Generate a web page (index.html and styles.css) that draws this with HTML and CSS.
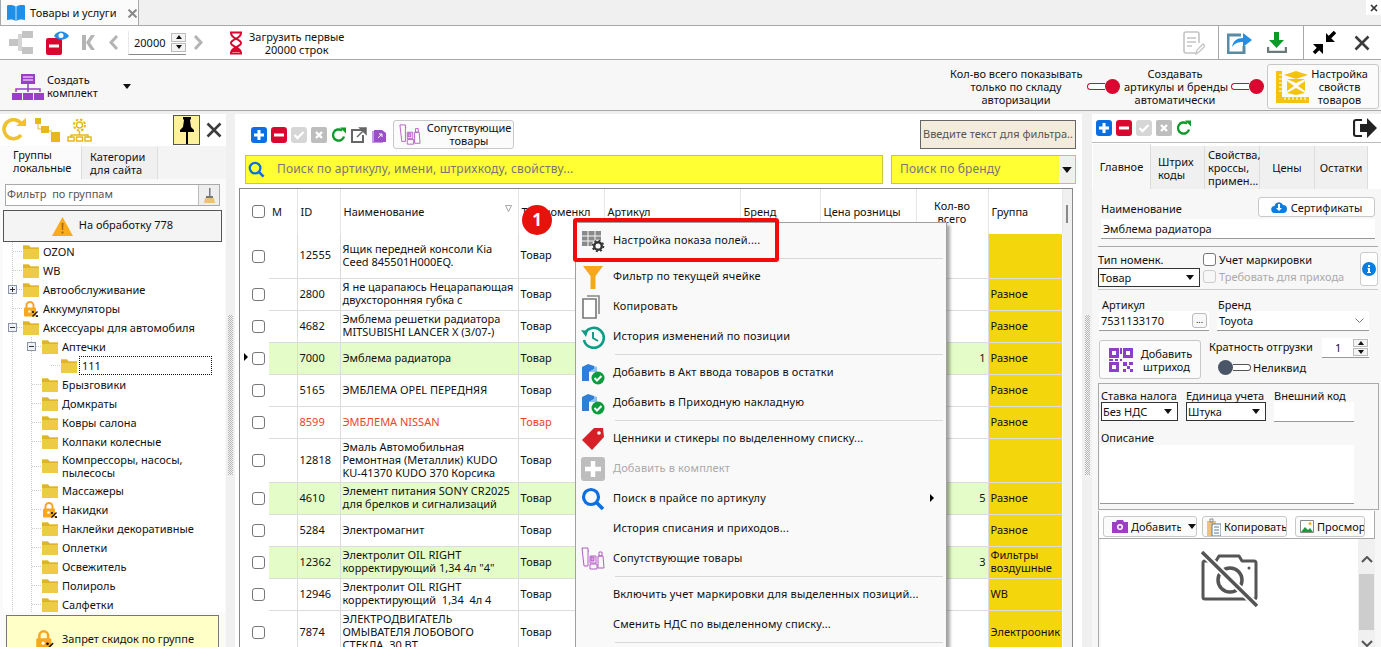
FILE: index.html
```html
<!DOCTYPE html>
<html lang="ru">
  <head>
    <meta charset="UTF-8" />
    <title>Товары и услуги</title>
    <link rel="stylesheet" href="styles.css">
  </head>
  <body>
    <svg class="sprite" width="0" height="0">
      <symbol id="i-plus" viewBox="0 0 16 16"><rect width="16" height="16" rx="3" fill="#0b6fe4"/><path d="M8 3v10M3 8h10" stroke="#fff" stroke-width="3"/></symbol>
      <symbol id="i-minus" viewBox="0 0 16 16"><rect width="16" height="16" rx="3" fill="#d9072f"/><path d="M3 8h10" stroke="#fff" stroke-width="3"/></symbol>
      <symbol id="i-check" viewBox="0 0 16 16"><rect width="16" height="16" rx="3" fill="#d6d6d6"/><path d="M3.500 8l3 3 6-6" stroke="#fff" stroke-width="2.400" fill="none"/></symbol>
      <symbol id="i-cross" viewBox="0 0 16 16"><rect width="16" height="16" rx="2" fill="#bdbdbd"/><path d="M5 5l6 6M11 5l-6 6" stroke="#fff" stroke-width="2.400"/></symbol>
      <symbol id="i-refresh" viewBox="0 0 16 16"><path d="M13 9.500A5.600 5.600 0 1 1 11 3.600" fill="none" stroke="#0c9a2a" stroke-width="2.400"/><path d="M9 .5h6v6z" fill="#0c9a2a"/></symbol>
      <symbol id="i-folder" viewBox="0 0 16 16"><path d="M0 1.500h6l1.500 2H16V15H0z" fill="#eecb45"/><path d="M0 1.500h6l1.500 2H16V5H0z" fill="#dfb32a"/></symbol>
      <symbol id="i-lock" viewBox="0 0 16 16"><path d="M3.500 7V4.500a3.500 3.500 0 0 1 7 0V7" fill="none" stroke="#f5a623" stroke-width="2"/><rect x="1" y="6.500" width="12" height="9" rx="1" fill="#f7a81c"/><circle cx="6.500" cy="10.500" r="1.300" fill="#fff"/><path d="M9.500 15.500l5-5" stroke="#111" stroke-width="1.200"/><circle cx="10" cy="11" r="1.100" fill="#111"/><circle cx="14" cy="15" r="1.100" fill="#111"/></symbol>
      <symbol id="i-grid-gear" viewBox="0 0 24 24"><path d="M1 2h19v15H1z" fill="#8a8a8a"/><path d="M1 7h19M1 12h19M7 2v15M14 2v15" stroke="#f9f9f9" stroke-width="1"/><circle cx="17" cy="17" r="6.500" fill="#f9f9f9"/><circle cx="17" cy="17" r="3.800" fill="none" stroke="#333" stroke-width="2.400"/><circle cx="17" cy="17" r="5.500" fill="none" stroke="#333" stroke-width="1.600" stroke-dasharray="2 2.300"/></symbol>
      <symbol id="i-cubes" viewBox="0 0 24 24"><path d="M1 6l6-3 6 2v3l-5 3v9H1z" fill="#2f7fd6"/><path d="M8 11l5-3V5l3 1v5z" fill="#8cc0ee"/><circle cx="17" cy="17" r="6.500" fill="#0b9a3c"/><path d="M13.500 17l2.500 2.500 4.500-4.500" fill="none" stroke="#fff" stroke-width="2"/></symbol>
      <symbol id="i-x" viewBox="0 0 16 16"><path d="M1.500 1.500l13 13M14.500 1.500l-13 13" stroke="#3c3c3c" stroke-width="2.600"/></symbol>
      <symbol id="i-caret" viewBox="0 0 8 5"><path d="M0 0h8L4 5z" fill="#111"/></symbol>
      <symbol id="i-search" viewBox="0 0 24 24"><circle cx="10" cy="10" r="7.500" fill="none" stroke="#0b6fe4" stroke-width="3.200"/><path d="M15.500 15.500L22 22" stroke="#0b6fe4" stroke-width="3.600"/></symbol>
      <symbol id="i-bottles" viewBox="0 0 24 24" fill="none" stroke="#b45cc4" stroke-width="1"><path d="M1 1h6v18H3zM7 4h1M9 9h6v7H9zM17 9h5l1 12h-6zM18 5h3v4h-3zM9 17h7v5H9z"/><path d="M10 10h3v4h-3z" fill="#d8a8de"/></symbol>
    </svg>

    <div class="tabbar">
      <div class="tab">
        <svg width="20" height="18" viewBox="0 0 20 18"><path d="M10 3C8 1 4 .5 1 1.500V16c3-1 7-.5 9 1 2-1.500 6-2 9-1V1.500C16 .5 12 1 10 3z" fill="#1f8fe8"/><path d="M10 3v14" stroke="#bfe0fa" stroke-width="1"/></svg>
        <span>Товары и услуги</span>
        <svg class="tab-x" width="9" height="9" viewBox="0 0 16 16"><path d="M1 1l14 14M15 1L1 15" stroke="#888" stroke-width="3.500"/></svg>
      </div>
      <div class="tabbar-close"><svg width="8" height="8" viewBox="0 0 16 16"><path d="M2 2l12 12M14 2L2 14" stroke="#333" stroke-width="3.500"/></svg></div>
    </div>

    <div class="bar-top">
      <svg class="ico-tree" width="24" height="23" viewBox="0 0 24 23"><path d="M0 8h9v7H0zM13 0h11v7H13zM13 16h11v7H13z" fill="#c4c4c4"/><path d="M9 3h4v17H9z" fill="#d4d4d4"/></svg>
      <svg class="ico-eye" width="23" height="24" viewBox="0 0 23 24"><rect y="7" width="16" height="17" rx="2" fill="#d9072f"/><path d="M3 15h10" stroke="#fff" stroke-width="3"/><path d="M8 5c3-6 11-6 15 0-4 5-11 5-15 0z" fill="#1f8fe8"/><circle cx="15" cy="4.500" r="2.500" fill="#fff"/></svg>
      <svg class="ico-first" width="13" height="15" viewBox="0 0 13 15"><path d="M0 0h4v15H0zM4 7.500L9 0h4L8 7.500l5 7.500H9z" fill="#b4b4b4"/></svg>
      <svg class="ico-prev" width="11" height="15" viewBox="0 0 11 15"><path d="M9 1L3 7.500 9 14" fill="none" stroke="#b4b4b4" stroke-width="3"/></svg>
      <div class="spin">
        <span>20000</span>
        <div class="spin-btns"><i class="up"></i><i class="down"></i></div>
      </div>
      <svg class="ico-next" width="11" height="15" viewBox="0 0 11 15"><path d="M2 1l6 6.500L2 14" fill="none" stroke="#b4b4b4" stroke-width="3"/></svg>
      <svg class="ico-hour" width="16" height="24" viewBox="0 0 16 24"><path d="M2 1.500h12M2 22.500h12M3 2c0 6 10 6 10 10s-10 4-10 10M13 2c0 6-10 6-10 10s10 4 10 10" fill="none" stroke="#d9072f" stroke-width="2"/><path d="M3 21c1-3 3-4 5-5 2 1 4 2 5 5z" fill="#d9072f"/></svg>
      <div class="load-text">Загрузить первые<br>20000 строк</div>
      <div class="spacer"></div>
      <svg class="ico-doc" width="22" height="24" viewBox="0 0 22 24"><path d="M14 22H3a2 2 0 0 1-2-2V3a2 2 0 0 1 2-2h11a2 2 0 0 1 2 2v9" fill="none" stroke="#c4c4c4" stroke-width="1.600"/><path d="M4 7h9M4 11h9M4 15h5" stroke="#c4c4c4" stroke-width="1.500"/><path d="M13 23l1-4 6-6 2 2-6 6z" fill="none" stroke="#c4c4c4" stroke-width="1.300"/></svg>
      <div class="vline vl1"></div>
      <svg class="ico-share" width="25" height="22" viewBox="0 0 25 22"><path d="M14 3H1v18h16v-7" fill="none" stroke="#5b8aa3" stroke-width="3"/><path d="M5 15c1-6 5-9 11-9V1l9 7-9 7v-5c-5 0-8 1-11 5z" fill="#1f8fe8"/></svg>
      <svg class="ico-down" width="20" height="21" viewBox="0 0 20 21"><path d="M7 0h5v8h5l-7.500 8L2 8h5z" fill="#0c9a2a"/><path d="M1 15v5h18v-5" fill="none" stroke="#6a7a78" stroke-width="2.400"/></svg>
      <div class="vline vl2"></div>
      <svg class="ico-col" width="24" height="24" viewBox="0 0 24 24"><path d="M23 1l-7 7M10 14l-8 8" stroke="#000" stroke-width="3.500"/><path d="M14 2v9h9zM1 13h10v10z" fill="#000"/></svg>
      <svg class="ico-close" width="16" height="16"><use href="#i-x"/></svg>
    </div>

    <div class="bar-second">
      <svg class="ico-kit" width="32" height="26" viewBox="0 0 32 26"><path d="M9 0h14v10H9z" fill="#9b3fc8"/><path d="M11 3h10M11 6h10" stroke="#fff"/><path d="M16 10v5M4 18v-3h24v3M16 15v3" stroke="#9b3fc8" stroke-width="1.500" fill="none"/><path d="M0 19h10v7H0zM11 19h10v7H11zM22 19h10v7H22z" fill="#9b3fc8"/></svg>
      <div class="kit-text">Создать<br>комплект</div>
      <svg class="caret kit-caret" width="8" height="5"><use href="#i-caret"/></svg>
      <div class="spacer"></div>
      <div class="opt-text opt-a">Кол-во всего показывать<br>только по складу<br>авторизации</div>
      <div class="toggle"><i></i><b></b></div>
      <div class="opt-text opt-b">Создавать<br>артикулы и бренды<br>автоматически</div>
      <div class="toggle toggle-2"><i></i><b></b></div>
      <button class="setup-btn">
        <svg width="33" height="32" viewBox="0 0 33 32"><path d="M0 0h6v26h27v6H0z" fill="#f2c40f"/><path d="M3 4h3M3 8h3M3 12h3M3 16h3M3 20h3M9 29v-3M13 29v-3M17 29v-3M21 29v-3M25 29v-3M29 29v-3" stroke="#fff"/><path d="M20 0l12 4-12 4L8 4z" fill="#f2c40f"/><path d="M11 8h18l-9 4zM11 10v10l7-5zM29 10v10l-7-5z" fill="#f2c40f"/><path d="M20 17l9 5-9 2-9-2z" fill="#f2c40f"/></svg>
        <span>Настройка<br>свойств<br>товаров</span>
      </button>
    </div>

    <div class="main">
      <div class="left">
        <div class="left-tools">
          <svg width="25" height="25" viewBox="0 0 25 25"><path d="M19 17a9.500 9.500 0 1 1 1-10" fill="none" stroke="#efc22d" stroke-width="3.600"/><path d="M14 8h10V0z" fill="#efc22d"/></svg>
          <svg class="lt-2" width="25" height="24" viewBox="0 0 25 24"><path d="M0 0h6v6H0zM6 8h8v7H6zM16 14h9v10h-9z" fill="#e6b820"/><path d="M3 6v5h3M14 13h3" stroke="#e6b820" fill="none"/></svg>
          <svg class="lt-3" width="25" height="24" viewBox="0 0 25 24" fill="none" stroke="#e6b820" stroke-width="1.500"><circle cx="12.500" cy="7" r="3"/><circle cx="12.500" cy="7" r="5.500" stroke-dasharray="2.500 1.800" stroke-width="2"/><path d="M12.500 13v4M4 20v-3h17v3"/><path d="M1 19h6v4H1zM9.500 19h6v4h-6zM18 19h6v4h-6z"/></svg>
          <div class="pin"><svg width="14" height="27" viewBox="0 0 14 27"><path d="M3 0h8v2l-1 1 1 7 3 3v2H0v-2l3-3 1-7-1-1zM6 15h2v12H6z" fill="#000"/></svg></div>
          <svg class="lt-x" width="16" height="16"><use href="#i-x"/></svg>
        </div>
        <div class="left-tabs">
          <div class="ltab active">Группы<br>локальные</div>
          <div class="ltab">Категории<br>для сайта</div>
        </div>
        <div class="left-body">
          <div class="group-filter">
            <span>Фильтр&nbsp; по группам</span>
            <i><svg width="11" height="15" viewBox="0 0 11 15"><path d="M5 0h1.500v8H5zM2 8h7v2H2z" fill="#777"/><path d="M1 10h9l1 5H0z" fill="#eec07a"/></svg></i>
          </div>
          <div class="process-btn">
            <svg width="21" height="19" viewBox="0 0 21 19"><path d="M10.500 0L21 19H0z" fill="#fbab1c"/><path d="M9.500 6h2l-.3 7h-1.400zM9.500 14.500h2v2h-2z" fill="#a56d10"/></svg>
            <span>На обработку 778</span>
          </div>
          <div class="tree">
            <div class="tr l1"><svg class="fi"><use href="#i-folder"/></svg>OZON</div>
            <div class="tr l1"><svg class="fi"><use href="#i-folder"/></svg>WB</div>
            <div class="tr l1"><i class="exp plus"></i><svg class="fi"><use href="#i-folder"/></svg>Автообслуживание</div>
            <div class="tr l1"><svg class="fi"><use href="#i-lock"/></svg>Аккумуляторы</div>
            <div class="tr l1"><i class="exp"></i><svg class="fi"><use href="#i-folder"/></svg>Аксессуары для автомобиля</div>
            <div class="tree-sub">
              <div class="tr l2"><i class="exp"></i><svg class="fi"><use href="#i-folder"/></svg>Аптечки</div>
              <div class="tr l3"><svg class="fi"><use href="#i-folder"/></svg><span class="tr-sel">111</span></div>
              <div class="tr l2"><svg class="fi"><use href="#i-folder"/></svg>Брызговики</div>
              <div class="tr l2"><svg class="fi"><use href="#i-folder"/></svg>Домкраты</div>
              <div class="tr l2"><svg class="fi"><use href="#i-folder"/></svg>Ковры салона</div>
              <div class="tr l2"><svg class="fi"><use href="#i-folder"/></svg>Колпаки колесные</div>
              <div class="tr l2 tall"><svg class="fi"><use href="#i-folder"/></svg><span>Компрессоры, насосы,<br>пылесосы</span></div>
              <div class="tr l2"><svg class="fi"><use href="#i-folder"/></svg>Массажеры</div>
              <div class="tr l2"><svg class="fi"><use href="#i-lock"/></svg>Накидки</div>
              <div class="tr l2"><svg class="fi"><use href="#i-folder"/></svg>Наклейки декоративные</div>
              <div class="tr l2"><svg class="fi"><use href="#i-folder"/></svg>Оплетки</div>
              <div class="tr l2"><svg class="fi"><use href="#i-folder"/></svg>Освежитель</div>
              <div class="tr l2"><svg class="fi"><use href="#i-folder"/></svg>Полироль</div>
              <div class="tr l2"><svg class="fi"><use href="#i-folder"/></svg>Салфетки</div>
            </div>
          </div>
          <div class="ban-box">
            <svg width="20" height="24" viewBox="0 0 16 16"><use href="#i-lock"/></svg>
            <span>Запрет скидок по группе</span>
          </div>
        </div>
      </div>

      <div class="split"><div class="split-dots"></div></div>

      <div class="center">
        <div class="center-tools">
          <svg class="t16"><use href="#i-plus"/></svg>
          <svg class="t16"><use href="#i-minus"/></svg>
          <svg class="t16"><use href="#i-check"/></svg>
          <svg class="t16"><use href="#i-cross"/></svg>
          <svg class="t16 tr-ref"><use href="#i-refresh"/></svg>
          <svg class="t16" viewBox="0 0 16 16"><path d="M11 3H1v12h11V8" fill="none" stroke="#666" stroke-width="2"/><path d="M6 10l8-8M9 1h6v6z" stroke="#666" fill="#666" stroke-width="1.500"/></svg>
          <svg class="t16" viewBox="0 0 16 16"><path d="M3 3h8l4 3v9H3z" fill="#9b4fc8"/><path d="M1 4h2v11h9v1H1z" fill="#c79ae0"/><path d="M7 11l4-4M8 7h3v3" stroke="#fff" fill="none"/></svg>
          <button class="rel-btn">
            <svg width="22" height="22" viewBox="0 0 24 24"><use href="#i-bottles"/></svg>
            <span>Сопутствующие<br>товары</span>
          </button>
          <div class="spacer"></div>
          <div class="filter-box">Введите текст для фильтра..</div>
        </div>
        <div class="search-row">
          <div class="search-main">
            <svg width="17" height="17"><use href="#i-search"/></svg>
            <span>Поиск по артикулу, имени, штрихкоду, свойству...</span>
          </div>
          <div class="search-brand">
            <span>Поиск по бренду</span>
            <i><svg width="10" height="6"><use href="#i-caret"/></svg></i>
          </div>
        </div>
        <div class="grid-wrap">
          <table class="grid">
            <colgroup>
              <col class="c-chk"><col class="c-m"><col class="c-id"><col class="c-name"><col class="c-type"><col class="c-art"><col class="c-brand"><col class="c-price"><col class="c-qty"><col class="c-group">
            </colgroup>
            <thead>
              <tr>
                <th class="chk"><b class="box"></b></th><th>М</th><th>ID</th>
                <th class="th-name">Наименование<svg width="7" height="7" viewBox="0 0 8 8"><path d="M.5.500h7L4 7.500z" fill="none" stroke="#999"/></svg></th>
                <th>Тип номенкл</th><th>Артикул</th><th>Бренд</th><th>Цена розницы</th><th class="th-qty">Кол-во<br>всего</th><th>Группа</th>
              </tr>
            </thead>
            <tbody>
              <tr class="r44"><td class="chk"><b class="box"></b></td><td></td><td>12555</td><td>Ящик передней консоли Kia<br>Ceed 845501H000EQ.</td><td>Товар</td><td></td><td></td><td></td><td></td><td class="grp"></td></tr>
              <tr><td class="chk"><b class="box"></b></td><td></td><td>2800</td><td>Я не царапаюсь Нецарапающая<br>двухсторонняя губка с</td><td>Товар</td><td></td><td></td><td></td><td></td><td class="grp">Разное</td></tr>
              <tr><td class="chk"><b class="box"></b></td><td></td><td>4682</td><td>Эмблема решетки радиатора<br>MITSUBISHI LANCER X (3/07-)</td><td>Товар</td><td></td><td></td><td></td><td></td><td class="grp">Разное</td></tr>
              <tr class="green"><td class="chk cur"><b class="box"></b></td><td></td><td>7000</td><td>Эмблема радиатора</td><td>Товар</td><td></td><td></td><td></td><td class="qty">1</td><td class="grp">Разное</td></tr>
              <tr><td class="chk"><b class="box"></b></td><td></td><td>5165</td><td>ЭМБЛЕМА OPEL ПЕРЕДНЯЯ</td><td>Товар</td><td></td><td></td><td></td><td></td><td class="grp">Разное</td></tr>
              <tr class="red"><td class="chk"><b class="box"></b></td><td></td><td>8599</td><td>ЭМБЛЕМА NISSAN</td><td>Товар</td><td></td><td></td><td></td><td></td><td class="grp">Разное</td></tr>
              <tr class="r44"><td class="chk"><b class="box"></b></td><td></td><td>12818</td><td>Эмаль Автомобильная<br>Ремонтная (Металлик) KUDO<br>KU-41370 KUDO 370 Корсика</td><td>Товар</td><td></td><td></td><td></td><td></td><td class="grp"></td></tr>
              <tr class="green"><td class="chk"><b class="box"></b></td><td></td><td>4610</td><td>Элемент питания SONY CR2025<br>для брелков и сигнализаций</td><td>Товар</td><td></td><td></td><td></td><td class="qty">5</td><td class="grp">Разное</td></tr>
              <tr><td class="chk"><b class="box"></b></td><td></td><td>5284</td><td>Электромагнит</td><td>Товар</td><td></td><td></td><td></td><td></td><td class="grp">Разное</td></tr>
              <tr class="green"><td class="chk"><b class="box"></b></td><td></td><td>12362</td><td>Электролит OIL RIGHT<br>корректирующий 1,34 4л "4"</td><td>Товар</td><td></td><td></td><td></td><td class="qty">3</td><td class="grp">Фильтры<br>воздушные</td></tr>
              <tr><td class="chk"><b class="box"></b></td><td></td><td>12946</td><td>Электролит OIL RIGHT<br>корректирующий&nbsp; 1,34&nbsp; 4л 4</td><td>Товар</td><td></td><td></td><td></td><td></td><td class="grp">WB</td></tr>
              <tr class="r44"><td class="chk"><b class="box"></b></td><td></td><td>7874</td><td>ЭЛЕКТРОДВИГАТЕЛЬ<br>ОМЫВАТЕЛЯ ЛОБОВОГО<br>СТЕКЛА, 30 ВТ</td><td>Товар</td><td></td><td></td><td></td><td></td><td class="grp">Электрооник</td></tr>
            </tbody>
          </table>
          <div class="grid-scroll"><i></i></div>
        </div>
      </div>

      <div class="split split-r"><div class="split-dots"></div></div>

      <div class="right">
        <div class="right-tools">
          <svg class="t16"><use href="#i-plus"/></svg>
          <svg class="t16"><use href="#i-minus"/></svg>
          <svg class="t16"><use href="#i-check"/></svg>
          <svg class="t16"><use href="#i-cross"/></svg>
          <svg class="t16"><use href="#i-refresh"/></svg>
          <div class="spacer"></div>
          <svg width="24" height="20" viewBox="0 0 24 20"><path d="M9 2H3a2 2 0 0 0-2 2v12a2 2 0 0 0 2 2h6" fill="none" stroke="#222" stroke-width="2.200"/><path d="M7 6h7V0l10 10-10 10v-6H7z" fill="#222"/></svg>
        </div>
        <div class="right-tabs">
          <div class="rtab active w58">Главное</div>
          <div class="rtab w54 tl tl-7">Штрих<br>коды</div>
          <div class="rtab w55 tl">Свойства,<br>кроссы,<br>примен...</div>
          <div class="rtab w55">Цены</div>
          <div class="rtab w53">Остатки</div>
        </div>
        <div class="right-body">
          <div class="row-name">
            <label>Наименование</label>
            <button class="cert-btn"><svg width="16" height="12" viewBox="0 0 16 12"><path d="M4 12a3.500 3.500 0 0 1-.5-7A4.500 4.500 0 0 1 12 4a4 4 0 0 1 0 8z" fill="#0b7de0"/><path d="M7 3h2v4h2L8 10 5 7h2z" fill="#fff"/></svg>Сертификаты</button>
          </div>
          <div class="inp inp-name">Эмблема радиатора</div>
          <div class="hr hr-1"></div>
          <div class="row-type">
            <div class="type-col">
              <label>Тип номенк.</label>
              <div class="sel sel-type">Товар<svg width="8" height="5"><use href="#i-caret"/></svg></div>
            </div>
            <div class="mark-col">
              <div class="chk-line"><b class="box"></b>Учет маркировки</div>
              <div class="chk-line off"><b class="box"></b>Требовать для прихода</div>
            </div>
            <div class="info-btn"><svg width="14" height="14" viewBox="0 0 14 14"><circle cx="7" cy="7" r="7" fill="#0b7de0"/><path d="M6 3h2v2H6zM5.500 6H8v4h1v1H5v-1h1V7h-.5z" fill="#fff"/></svg></div>
          </div>
          <div class="hr hr-2"></div>
          <div class="row-art">
            <div class="art-col">
              <label>Артикул</label>
              <div class="inp inp-art">7531133170<i>...</i></div>
            </div>
            <div class="brand-col">
              <label>Бренд</label>
              <div class="inp inp-brand">Toyota<svg width="9" height="5" viewBox="0 0 9 5"><path d="M.5.500l4 4 4-4" fill="none" stroke="#777"/></svg></div>
            </div>
          </div>
          <div class="row-code">
            <button class="code-btn">
              <svg width="24" height="24" viewBox="0 0 24 24" fill="#8e3fc8"><path d="M0 0h10v10H0zM14 0h10v10H14zM0 14h10v10H0z"/><path d="M3 3h4v4H3zM17 3h4v4h-4zM3 17h4v4H3z" fill="#fff"/><path d="M14 14h4v4h-4zM20 14h4v3h-4zM18 18h3v3h-3zM14 21h3v3h-3zM21 21h3v3h-3zM11 0h2v6h-2zM11 11h2v2h-2zM0 11h4v2H0zM6 11h3v2H6z"/></svg>
              <span>Добавить<br>штриход</span>
            </button>
            <div class="code-side">
              <div class="mult"><span class="mult-label">Кратность отгрузки</span><div class="mult-spin"><span>1</span><div class="spin-btns"><i class="up"></i><i class="down"></i></div></div></div>
              <div class="illiq"><div class="toggle off"><b></b><i></i></div>Неликвид</div>
            </div>
          </div>
          <div class="tax-box">
            <div class="tax-row">
              <div class="tax-col w80"><label>Ставка налога</label><div class="sel">Без НДС<svg width="8" height="5"><use href="#i-caret"/></svg></div></div>
              <div class="tax-col w85"><label>Единица учета</label><div class="sel">Штука<svg width="8" height="5"><use href="#i-caret"/></svg></div></div>
              <div class="tax-col w80 ext"><label>Внешний код</label><div class="inp inp-ext"></div></div>
            </div>
            <label class="desc-label">Описание</label>
            <div class="desc"></div>
          </div>
          <div class="photo-box">
            <div class="photo-tools">
              <button class="ph-btn ph-add"><svg width="16" height="13" viewBox="0 0 16 13"><path d="M0 2h4l1-2h6l1 2h4v11H0z" fill="#9b3fc8"/><circle cx="8" cy="7" r="3" fill="#fff"/><circle cx="8" cy="7" r="1.500" fill="#9b3fc8"/></svg><span>Добавить</span><svg class="ph-caret" width="8" height="5"><use href="#i-caret"/></svg></button>
              <button class="ph-btn ph-copy"><svg width="14" height="18" viewBox="0 0 14 18"><path d="M0 3h9v15H0z" fill="#eec27a"/><path d="M3 1h3v3H3z" fill="none" stroke="#888"/><path d="M5 6h9v12H5z" fill="#fff" stroke="#5b7a92"/><path d="M7 9h5M7 12h5M7 15h5" stroke="#5b7a92"/></svg><span>Копировать</span></button>
              <button class="ph-btn ph-view"><svg width="14" height="13" viewBox="0 0 14 13"><path d="M.5.500h13v12H.5z" fill="#fff" stroke="#888"/><path d="M1 12l4-5 3 3 2-2 3 4z" fill="#1a9a3c"/><circle cx="10" cy="3.500" r="1.500" fill="#f2b01e"/></svg><span>Просмор</span></button>
            </div>
            <div class="photo-area">
              <div class="photo-main">
                <svg width="57" height="57" viewBox="0 0 57 57" fill="none"><path d="M3 10h12l3-5h20l3 5h12a2 2 0 0 1 2 2v34a2 2 0 0 1-2 2H4a2 2 0 0 1-2-2V12a2 2 0 0 1 1-2z" stroke="#555" stroke-width="3" stroke-linejoin="round"/><circle cx="29" cy="29" r="12" stroke="#555" stroke-width="3.500"/><circle cx="48" cy="17" r="1.500" fill="#555"/><path d="M1 1l55 54" stroke="#fff" stroke-width="7"/><path d="M1 1l55 54" stroke="#555" stroke-width="3.500"/></svg>
              </div>
              <div class="photo-scroll">
                <svg width="12" height="7" viewBox="0 0 12 7"><path d="M1 6l5-5 5 5" fill="none" stroke="#555" stroke-width="2"/></svg>
                <i></i>
                <svg width="12" height="7" viewBox="0 0 12 7"><path d="M1 1l5 5 5-5" fill="none" stroke="#555" stroke-width="2"/></svg>
              </div>
            </div>
          </div>
        </div>
      </div>
    </div>

    <div class="ctx-menu">
      <div class="mi"><svg class="mi-ico"><use href="#i-grid-gear"/></svg>Настройка показа полей....</div>
      <div class="ms"></div>
      <div class="mi"><svg class="mi-ico" viewBox="0 0 24 24"><path d="M2 1h20l-7.500 10v13h-5V11z" fill="#f6a81c"/></svg>Фильтр по текущей ячейке</div>
      <div class="mi"><svg class="mi-ico" viewBox="0 0 24 24"><path d="M6 1h12v18" fill="none" stroke="#888" stroke-width="1.600"/><path d="M2 4h13v19H2z" fill="#fff" stroke="#777" stroke-width="1.600"/></svg>Копировать</div>
      <div class="mi"><svg class="mi-ico" viewBox="0 0 24 24"><path d="M4 8a10 10 0 1 1-1 7" fill="none" stroke="#0e9c85" stroke-width="2.600"/><path d="M0 5l7 1-2 6z" fill="#0e9c85"/><path d="M12 7v6l5 3" fill="none" stroke="#0e9c85" stroke-width="2"/></svg>История изменений по позиции</div>
      <div class="ms"></div>
      <div class="mi"><svg class="mi-ico"><use href="#i-cubes"/></svg>Добавить в Акт ввода товаров в остатки</div>
      <div class="mi"><svg class="mi-ico"><use href="#i-cubes"/></svg>Добавить в Приходную накладную</div>
      <div class="ms"></div>
      <div class="mi"><svg class="mi-ico" viewBox="0 0 24 24"><path d="M1 13L13 1h9l1 9-12 13z" fill="#d61f26"/><circle cx="18" cy="6" r="1.800" fill="#fff"/></svg>Ценники и стикеры по выделенному списку...</div>
      <div class="mi off"><svg class="mi-ico" viewBox="0 0 24 24"><rect width="24" height="24" rx="3" fill="#bdbdbd"/><path d="M12 4v16M4 12h16" stroke="#fff" stroke-width="4.500"/></svg>Добавить в комплект</div>
      <div class="mi"><svg class="mi-ico"><use href="#i-search"/></svg>Поиск в прайсе по артикулу<i class="mi-arrow"></i></div>
      <div class="mi"><span class="mi-ico"></span>История списания и приходов...</div>
      <div class="mi"><svg class="mi-ico"><use href="#i-bottles"/></svg>Сопутствующие товары</div>
      <div class="ms"></div>
      <div class="mi"><span class="mi-ico"></span>Включить учет маркировки для выделенных позиций...</div>
      <div class="mi"><span class="mi-ico"></span>Сменить НДС по выделенному списку...</div>
      <div class="ms"></div>
    </div>
    <div class="hl-frame"></div>
    <div class="step-badge">1</div>
  </body>
</html>
```

FILE: styles.css
```css
* {
  box-sizing: border-box;
}

html,
body {
  margin: 0;
  height: 647px;
  overflow: hidden;
}

body {
  position: relative;
  font-family: "Noto Sans", sans-serif;
  font-size: 11px;
  line-height: 13px;
  color: #111;
  background-color: #f0f0f0;
  display: flex;
  flex-direction: column;
}

.sprite {
  position: absolute;
}

.spacer {
  flex: 1;
}

label {
  display: block;
}

button {
  font: inherit;
  color: inherit;
  padding: 0;
}

svg {
  flex: none;
  display: block;
}

/* tab strip */
.tabbar {
  height: 26px;
  flex: none;
  display: flex;
  justify-content: space-between;
  background-color: #f0f0f0;
  border-bottom: 1px solid #a8a8a8;
}

.tab {
  width: 139px;
  height: 25px;
  display: flex;
  align-items: center;
  padding: 1px 0 0 5px;
  background-color: #fbfbfb;
  border-right: 1px solid #a8a8a8;
  border-left: 1px solid #a8a8a8;
}

.tab span {
  margin: 0 0 1px 4px;
}

.tab-x {
  margin-left: 11px;
}

.tabbar-close {
  width: 15px;
  height: 15px;
  background-color: #fff;
  display: flex;
  align-items: center;
  justify-content: center;
}

/* first toolbar */
.bar-top {
  height: 34px;
  flex: none;
  display: flex;
  align-items: center;
  background-color: #fff;
  border-bottom: 1px solid #a8a8a8;
  padding-left: 9px;
}

.ico-eye {
  margin-left: 13px;
}

.ico-first {
  margin-left: 13px;
}

.ico-prev {
  margin-left: 13px;
}

.spin {
  width: 58px;
  height: 24px;
  margin-left: 9px;
  display: flex;
  align-items: center;
  justify-content: space-between;
  padding-left: 5px;
  border-bottom: 1px solid #888;
  border-left: 1px solid #e8e8e8;
}

.spin-btns {
  width: 15px;
  display: flex;
  flex-direction: column;
  gap: 1px;
}

.spin-btns i {
  height: 9px;
  border: 1px solid #bbb;
  background-color: #f4f4f4;
  display: flex;
  align-items: center;
  justify-content: center;
}

.spin-btns i::before {
  content: "";
  border-left: 3px solid transparent;
  border-right: 3px solid transparent;
}

.spin-btns .up::before {
  border-bottom: 4px solid #111;
}

.spin-btns .down::before {
  border-top: 4px solid #111;
}

.ico-next {
  margin-left: 7px;
}

.ico-hour {
  margin-left: 24px;
}

.load-text {
  margin-left: 5px;
  text-align: center;
}

.vline {
  width: 1px;
  height: 33px;
  background-color: #a8a8a8;
}

.vl1 {
  margin-left: 13px;
}

.ico-share {
  margin-left: 8px;
}

.ico-down {
  margin-left: 15px;
}

.vl2 {
  margin-left: 16px;
}

.ico-col {
  margin-left: 8px;
}

.ico-close {
  margin: 0 11px 0 18px;
}

/* second toolbar */
.bar-second {
  height: 51px;
  flex: none;
  display: flex;
  align-items: center;
  background-color: #f7f7f7;
  border-bottom: 1px solid #a8a8a8;
  padding: 3px 2px 0 12px;
}

.kit-text {
  margin: 0 0 2px 3px;
}

.kit-caret {
  margin-left: 25px;
}

.opt-text {
  text-align: center;
  white-space: nowrap;
  margin-bottom: 1px;
}

.opt-a {
  width: 132px;
}

.toggle {
  display: flex;
  align-items: center;
  width: 33px;
  margin: 0 4px 0 5px;
}

.toggle-2 {
  margin-right: 0;
}

.toggle i {
  flex: 1;
  height: 7px;
  border: 1px solid #d9072f;
  border-right: 0;
  border-radius: 4px 0 0 4px;
  background-color: #fff;
}

.toggle b {
  width: 15px;
  height: 15px;
  border-radius: 50%;
  background-color: #d9072f;
}

.opt-b {
  width: 102px;
}

.toggle.off i {
  border-color: #555;
  border-left: 0;
  border-right: 1px solid #555;
  border-radius: 0 4px 4px 0;
}

.toggle.off b {
  background-color: #4a5568;
}

.setup-btn {
  width: 112px;
  height: 45px;
  margin-left: 3px;
  display: flex;
  align-items: center;
  background-color: #fbfbfb;
  border: 1px solid #c8c8c8;
  border-radius: 3px;
  padding-left: 8px;
}

.setup-btn span {
  flex: 1;
  text-align: center;
  padding-right: 8px;
}

/* main area */
.main {
  height: 536px;
  flex: none;
  display: flex;
  align-items: stretch;
}

.left {
  width: 226px;
  flex: none;
  display: flex;
  flex-direction: column;
  background-color: #f0f0f0;
  overflow: hidden;
  margin-top: 3px;
}

.left-tools {
  height: 32px;
  flex: none;
  display: flex;
  align-items: center;
  background-color: #fff;
  padding-left: 2px;
}

.lt-2 {
  margin-left: 8px;
}

.lt-3 {
  margin-left: 7px;
}

.pin {
  width: 27px;
  height: 30px;
  margin-left: 81px;
  display: flex;
  align-items: center;
  justify-content: center;
  background-color: #fff29a;
  border: 1px solid #555;
}

.lt-x {
  margin-left: 6px;
}

.left-tabs {
  height: 33px;
  flex: none;
  display: flex;
  background-color: #f4f4f4;
}

.ltab {
  width: 76px;
  padding: 3px 0 0 8px;
  margin-top: 1px;
  background-color: #f0f0f0;
  border-right: 1px solid #ddd;
}

.ltab.active {
  width: 82px;
  margin-top: 0;
  padding: 2px 0 0 13px;
  background-color: #fbfbfb;
}

.left-body {
  flex: 1;
  background-color: #fafafa;
  padding: 5px 0 0;
  display: flex;
  flex-direction: column;
}

.group-filter {
  width: 215px;
  height: 22px;
  margin-left: 5px;
  display: flex;
  align-items: center;
  justify-content: space-between;
  background-color: #fff;
  border: 1px solid #aaa;
  padding-left: 1px;
  color: #555;
}

.group-filter span {
  margin-bottom: 3px;
}

.group-filter i {
  width: 21px;
  height: 20px;
  background-color: #eee;
  border-left: 1px solid #bbb;
  display: flex;
  align-items: center;
  justify-content: center;
}

.process-btn {
  width: 219px;
  height: 32px;
  margin: 4px 0 0 3px;
  display: flex;
  align-items: center;
  justify-content: center;
  gap: 6px;
  background-color: #f4f4f4;
  border: 1px solid #555;
}

.process-btn span {
  margin-bottom: 3px;
}

.tree {
  flex: none;
  height: 370px;
  overflow: hidden;
  background-color: #fff;
  width: 222px;
  margin-left: 3px;
  background-image: repeating-linear-gradient(#ccc 0 1px, transparent 1px 2px);
  background-size: 1px 100%;
  background-position: 9px 0;
  background-repeat: no-repeat;
}

.tree-sub {
  background-image: repeating-linear-gradient(#ccc 0 1px, transparent 1px 2px);
  background-size: 1px 100%;
  background-position: 28px 0;
  background-repeat: no-repeat;
}

.tr {
  position: relative;
  height: 19px;
  display: flex;
  align-items: center;
  gap: 4px;
}

.tr::before {
  content: "";
  width: 10px;
  height: 1px;
  background-image: repeating-linear-gradient(90deg, #ccc 0 1px, transparent 1px 2px);
  position: absolute;
}

.l1 {
  padding-left: 20px;
}

.l1::before {
  left: 10px;
}

.l2 {
  padding-left: 39px;
}

.l2::before {
  left: 29px;
}

.l3 {
  padding-left: 58px;
}

.l3::before {
  left: 48px;
}

.fi {
  width: 16px;
  height: 16px;
}

.exp {
  position: absolute;
  width: 9px;
  height: 9px;
  background-color: #eef1f5;
  border: 1px solid #8a94a6;
  z-index: 1;
}

.l1 .exp {
  left: 5px;
}

.l2 .exp {
  left: 24px;
}

.exp::before {
  content: "";
  position: absolute;
  left: 1px;
  top: 3px;
  width: 5px;
  height: 1px;
  background-color: #333;
}

.exp.plus::after {
  content: "";
  position: absolute;
  left: 3px;
  top: 1px;
  width: 1px;
  height: 5px;
  background-color: #333;
}

.tr-sel {
  width: 133px;
  height: 19px;
  border: 1px dotted #111;
  display: flex;
  align-items: center;
  padding-left: 2px;
  margin-left: -2px;
}

.tall {
  height: 30px;
}

.ban-box {
  width: 213px;
  height: 40px;
  margin: 3px 0 0 6px;
  display: flex;
  align-items: flex-start;
  justify-content: center;
  gap: 7px;
  padding: 12px 0 0 4px;
  background-color: #ffffc8;
  border: 1px solid #777;
}

.ban-box span {
  margin-top: 4px;
}

.split {
  width: 9px;
  flex: none;
  display: flex;
  justify-content: center;
  padding-top: 204px;
}

.split-r {
  width: 10px;
}

.split-dots {
  width: 5px;
  height: 160px;
  background-image: conic-gradient(#b8b8b8 25%, transparent 0 50%, #b8b8b8 0 75%, transparent 0);
  background-size: 2px 2px;
}

/* center */
.center {
  width: 847px;
  flex: none;
  margin-top: 3px;
  background-color: #fff;
  display: flex;
  flex-direction: column;
  padding: 6px 6px 0 4px;
}

.center-tools {
  height: 29px;
  flex: none;
  display: flex;
  align-items: center;
  padding-left: 12px;
  gap: 4px;
}

.t16 {
  width: 16px;
  height: 16px;
}

.rel-btn {
  width: 121px;
  height: 29px;
  margin-left: 2px;
  display: flex;
  align-items: center;
  gap: 4px;
  padding-left: 5px;
  background-color: #fbfbfb;
  border: 1px solid #c8c8c8;
  border-radius: 3px;
}

.rel-btn span {
  flex: 1;
  text-align: center;
  margin-bottom: 1px;
}

.filter-box {
  width: 156px;
  height: 29px;
  display: flex;
  align-items: center;
  justify-content: center;
  padding-bottom: 2px;
  background-color: #f3ecdd;
  border: 1px solid #666;
  color: #555;
  white-space: nowrap;
}

.search-row {
  height: 29px;
  flex: none;
  display: flex;
  margin: 6px 0 0 6px;
  gap: 8px;
  font-size: 12px;
  letter-spacing: 0.16px;
  color: #777;
}

.search-main {
  width: 638px;
  display: flex;
  align-items: center;
  gap: 12px;
  padding-left: 2px;
  background-color: #ffff33;
  border: 1px solid #cfc63e;
}

.search-main span,
.search-brand span {
  margin-bottom: 2px;
}

.search-brand {
  width: 185px;
  display: flex;
  align-items: center;
  justify-content: space-between;
  padding-left: 8px;
  background-color: #ffff33;
  border: 1px solid #cfc63e;
}

.search-brand i {
  width: 16px;
  height: 27px;
  background-color: #f0f0f0;
  display: flex;
  align-items: center;
  justify-content: center;
}

.grid-wrap {
  flex: 1;
  min-height: 0;
  overflow: hidden;
  display: flex;
  margin: 4px 3px 0 0;
  border: 1px solid #888;
  border-bottom: 0;
}

.grid {
  width: 822px;
  flex: none;
  table-layout: fixed;
  border-collapse: collapse;
  align-self: flex-start;
}

.grid-scroll {
  flex: 1;
  background-color: #f0f0f0;
  display: flex;
  justify-content: center;
  padding-top: 16px;
}

.grid-scroll i {
  width: 2px;
  height: 18px;
  background-color: #888;
}

.c-chk { width: 29px; }
.c-m { width: 28px; }
.c-id { width: 43px; }
.c-name { width: 178px; }
.c-type { width: 86px; }
.c-art { width: 136px; }
.c-brand { width: 80px; }
.c-price { width: 96px; }
.c-qty { width: 72px; }
.c-group { width: 74px; }

.grid th {
  height: 45px;
  padding: 0 3px;
  font-weight: normal;
  text-align: left;
  border-right: 1px solid #e6e6e6;
  white-space: nowrap;
  overflow: hidden;
}

.th-name {
  position: relative;
}

.th-name svg {
  position: absolute;
  right: 6px;
  top: 16px;
}

.grid .th-qty {
  text-align: center;
}

.grid td {
  height: 32px;
  padding: 0 2px 2px 2px;
  border-right: 1px solid #dcdcdc;
  border-bottom: 1px solid #dcdcdc;
  white-space: nowrap;
  overflow: hidden;
}

.grid .r44 td {
  height: 44px;
}

.grid .chk {
  padding: 0 0 0 12px;
  border: 0;
  background-color: #fff;
  position: relative;
}

.grid tbody .chk {
  border: 0;
  padding: 0 0 0 12px;
}

.cur::before {
  content: "";
  position: absolute;
  left: 4px;
  top: 11px;
  border-left: 4px solid #000;
  border-top: 4px solid transparent;
  border-bottom: 4px solid transparent;
}

.box {
  display: block;
  flex: none;
  width: 13px;
  height: 13px;
  background-color: #fff;
  border: 1px solid #777;
  border-radius: 3px;
}

.green td {
  background-color: #e4fcc8;
}

.red td {
  color: #e8452a;
}

.grid .grp {
  background-color: #f4d60c;
  border-right: 0;
  color: #111;
}

.grid .qty {
  text-align: right;
}

/* right panel */
.right {
  width: 289px;
  flex: none;
  margin-top: 3px;
  background-color: #fff;
  display: flex;
  flex-direction: column;
  overflow: hidden;
}

.right-tools {
  height: 29px;
  flex: none;
  display: flex;
  align-items: center;
  gap: 4px;
  padding: 0 4px 0 4px;
  border-bottom: 1px solid #bbb;
}

.right-tabs {
  height: 46px;
  flex: none;
  display: flex;
  align-items: flex-end;
  background-color: #fff;
  padding-left: 1px;
}

.rtab {
  height: 43px;
  display: flex;
  align-items: center;
  justify-content: center;
  background-color: #f0f0f0;
  border-right: 1px solid #ddd;
}

.rtab.tl {
  justify-content: flex-start;
  padding-left: 3px;
}

.rtab.tl-7 {
  padding-left: 7px;
}

.rtab.active {
  height: 45px;
  background-color: #f7f7f7;
}

.w58 { width: 58px; }
.w54 { width: 54px; }
.w55 { width: 55px; }
.w53 { width: 53px; }

.right-body {
  flex: 1;
  background-color: #f7f7f7;
  padding: 7px 0 0 6px;
}

.row-name {
  display: flex;
  align-items: flex-end;
  justify-content: space-between;
  padding: 0 6px 0 3px;
  height: 21px;
}

.row-name label {
  margin-bottom: 2px;
}

.cert-btn {
  width: 117px;
  height: 20px;
  display: flex;
  align-items: center;
  justify-content: center;
  gap: 4px;
  background-color: #fff;
  border: 1px solid #c8c8c8;
  border-radius: 3px;
}

.inp {
  display: flex;
  align-items: center;
  justify-content: space-between;
  background-color: #fff;
  border-bottom: 1px solid #999;
  padding: 0 2px;
}

.inp-name {
  width: 274px;
  height: 20px;
  margin: 2px 0 0 3px;
}

.hr {
  height: 1px;
  background-color: #aaa;
  width: 280px;
}

.hr-1 {
  margin-top: 7px;
}

.row-type {
  height: 42px;
  display: flex;
}

.type-col {
  width: 105px;
  padding-top: 6px;
}

.sel {
  height: 19px;
  display: flex;
  align-items: center;
  justify-content: space-between;
  padding: 0 5px 0 1px;
  background-color: #fff;
  border: 1px solid #333;
}

.sel-type {
  width: 102px;
  margin-top: 2px;
}

.mark-col {
  width: 157px;
  padding-top: 4px;
}

.chk-line {
  height: 17px;
  display: flex;
  align-items: center;
  gap: 3px;
}

.chk-line.off {
  color: #aaa;
}

.chk-line.off .box {
  border-color: #ccc;
  background-color: transparent;
}

.info-btn {
  width: 18px;
  height: 34px;
  margin-top: 5px;
  display: flex;
  align-items: center;
  justify-content: center;
  background-color: #fff;
  border: 1px solid #ccc;
  border-radius: 3px;
}

.hr-2 {
  background-color: #ccc;
}

.row-art {
  height: 48px;
  display: flex;
  padding: 8px 0 0 1px;
}

.art-col {
  width: 118px;
}

.art-col label {
  padding-left: 3px;
}

.inp-art {
  width: 110px;
  height: 20px;
}

.inp-art i {
  width: 15px;
  height: 15px;
  font-style: normal;
  font-size: 9px;
  line-height: 11px;
  text-align: center;
  background-color: #f8f8f8;
  border: 1px solid #bbb;
  border-radius: 3px;
}

.brand-col label {
  padding-left: 1px;
}

.inp-brand {
  width: 152px;
  height: 20px;
  padding-right: 5px;
}

.row-code {
  height: 45px;
  display: flex;
  padding-left: 1px;
}

.code-btn {
  width: 102px;
  height: 39px;
  margin-top: 2px;
  display: flex;
  align-items: center;
  gap: 4px;
  padding-left: 9px;
  background-color: #fbfbfb;
  border: 1px solid #c8c8c8;
  border-radius: 3px;
}

.code-btn span {
  flex: 1;
  text-align: center;
  padding-right: 4px;
}

.code-side {
  padding-left: 8px;
}

.mult {
  width: 160px;
  height: 20px;
  display: flex;
  align-items: center;
  justify-content: space-between;
}

.mult-label {
  margin-bottom: 3px;
}

.mult-spin {
  width: 47px;
  height: 20px;
  display: flex;
  align-items: center;
  justify-content: space-between;
  padding-left: 13px;
  background-color: #fff;
  border-bottom: 1px solid #999;
}

.mult-spin .spin-btns {
  width: 15px;
  margin-right: 1px;
}

.mult-spin .spin-btns i {
  height: 8px;
}

.illiq {
  display: flex;
  align-items: center;
  gap: 2px;
  margin-top: 2px;
  padding-left: 9px;
}

.illiq .toggle {
  width: 33px;
  margin: 0;
}

.tax-box {
  width: 281px;
  height: 127px;
  margin-left: 0;
  border: 1px solid #aaa;
  padding: 5px 0 0 2px;
}

.tax-row {
  display: flex;
  gap: 8px;
}

.w80 { width: 77px; }
.w85 { width: 80px; }

.ext {
  width: 80px;
}

.inp-ext {
  height: 20px;
}

.desc-label {
  margin-top: 9px;
}

.desc {
  width: 254px;
  height: 59px;
  margin: 1px 0 0 -1px;
  background-color: #fff;
  border-bottom: 1px solid #999;
}

.photo-box {
  width: 277px;
  height: 140px;
  border-left: 1px solid #aaa;
}

.photo-tools {
  height: 28px;
  display: flex;
  align-items: flex-start;
  padding: 5px 0 0 4px;
  gap: 5px;
  background-color: #fff;
  border-bottom: 1px solid #aaa;
  border-right: 1px solid #aaa;
  margin-top: 1px;
}

.ph-btn {
  height: 21px;
  display: flex;
  align-items: center;
  gap: 3px;
  padding-left: 8px;
  background-color: #fbfbfb;
  border: 1px solid #c8c8c8;
  border-radius: 3px;
  white-space: nowrap;
  overflow: hidden;
}

.ph-add {
  width: 94px;
}

.ph-add span {
  width: 50px;
  overflow: hidden;
  text-align: left;
}

.ph-caret {
  margin-left: 4px;
}

.ph-copy {
  width: 85px;
  padding-left: 4px;
}

.ph-view {
  width: 70px;
  padding-left: 4px;
  margin-left: 3px;
}

.photo-area {
  display: flex;
  height: 111px;
  padding-left: 2px;
}

.photo-main {
  width: 257px;
  background-color: #fff;
  display: flex;
  justify-content: center;
  padding-top: 12px;
}

.photo-scroll {
  width: 17px;
  background-color: #f0f0f0;
  display: flex;
  flex-direction: column;
  align-items: center;
  padding-top: 17px;
}

.photo-scroll i {
  width: 15px;
  height: 56px;
  margin: 11px 0 10px;
  background-color: #cdcdcd;
}

/* context menu and callouts */
.ctx-menu {
  position: absolute;
  left: 575px;
  top: 222px;
  width: 372px;
  height: 430px;
  padding: 2px 0 0 2px;
  background-color: #f9f9f9;
  border: 1px solid #a0a0a0;
  box-shadow: 3px 3px 3px rgba(0, 0, 0, 0.35);
  overflow: hidden;
  letter-spacing: 0.16px;
}

.mi {
  height: 30px;
  display: flex;
  align-items: center;
  gap: 8px;
  padding-bottom: 2px;
  position: relative;
}

.mi.off {
  color: #aaa;
}

.mi-ico {
  width: 24px;
  height: 24px;
  flex: none;
  margin: 4px 0 0 3px;
}

.mi-arrow {
  position: absolute;
  right: 12px;
  top: 11px;
  border-left: 4px solid #000;
  border-top: 4px solid transparent;
  border-bottom: 4px solid transparent;
}

.ms {
  height: 1px;
  margin: 3px 3px 2px 37px;
  background-color: #d8d8d8;
}

.hl-frame {
  position: absolute;
  left: 573px;
  top: 218px;
  width: 206px;
  height: 44px;
  border: 4px solid #f50a0a;
  border-radius: 3px;
}

.step-badge {
  position: absolute;
  left: 522px;
  top: 205px;
  width: 30px;
  height: 30px;
  border-radius: 50%;
  background-color: #e8120c;
  color: #fff;
  font-size: 17px;
  font-weight: bold;
  line-height: 30px;
  text-align: center;
}
```
